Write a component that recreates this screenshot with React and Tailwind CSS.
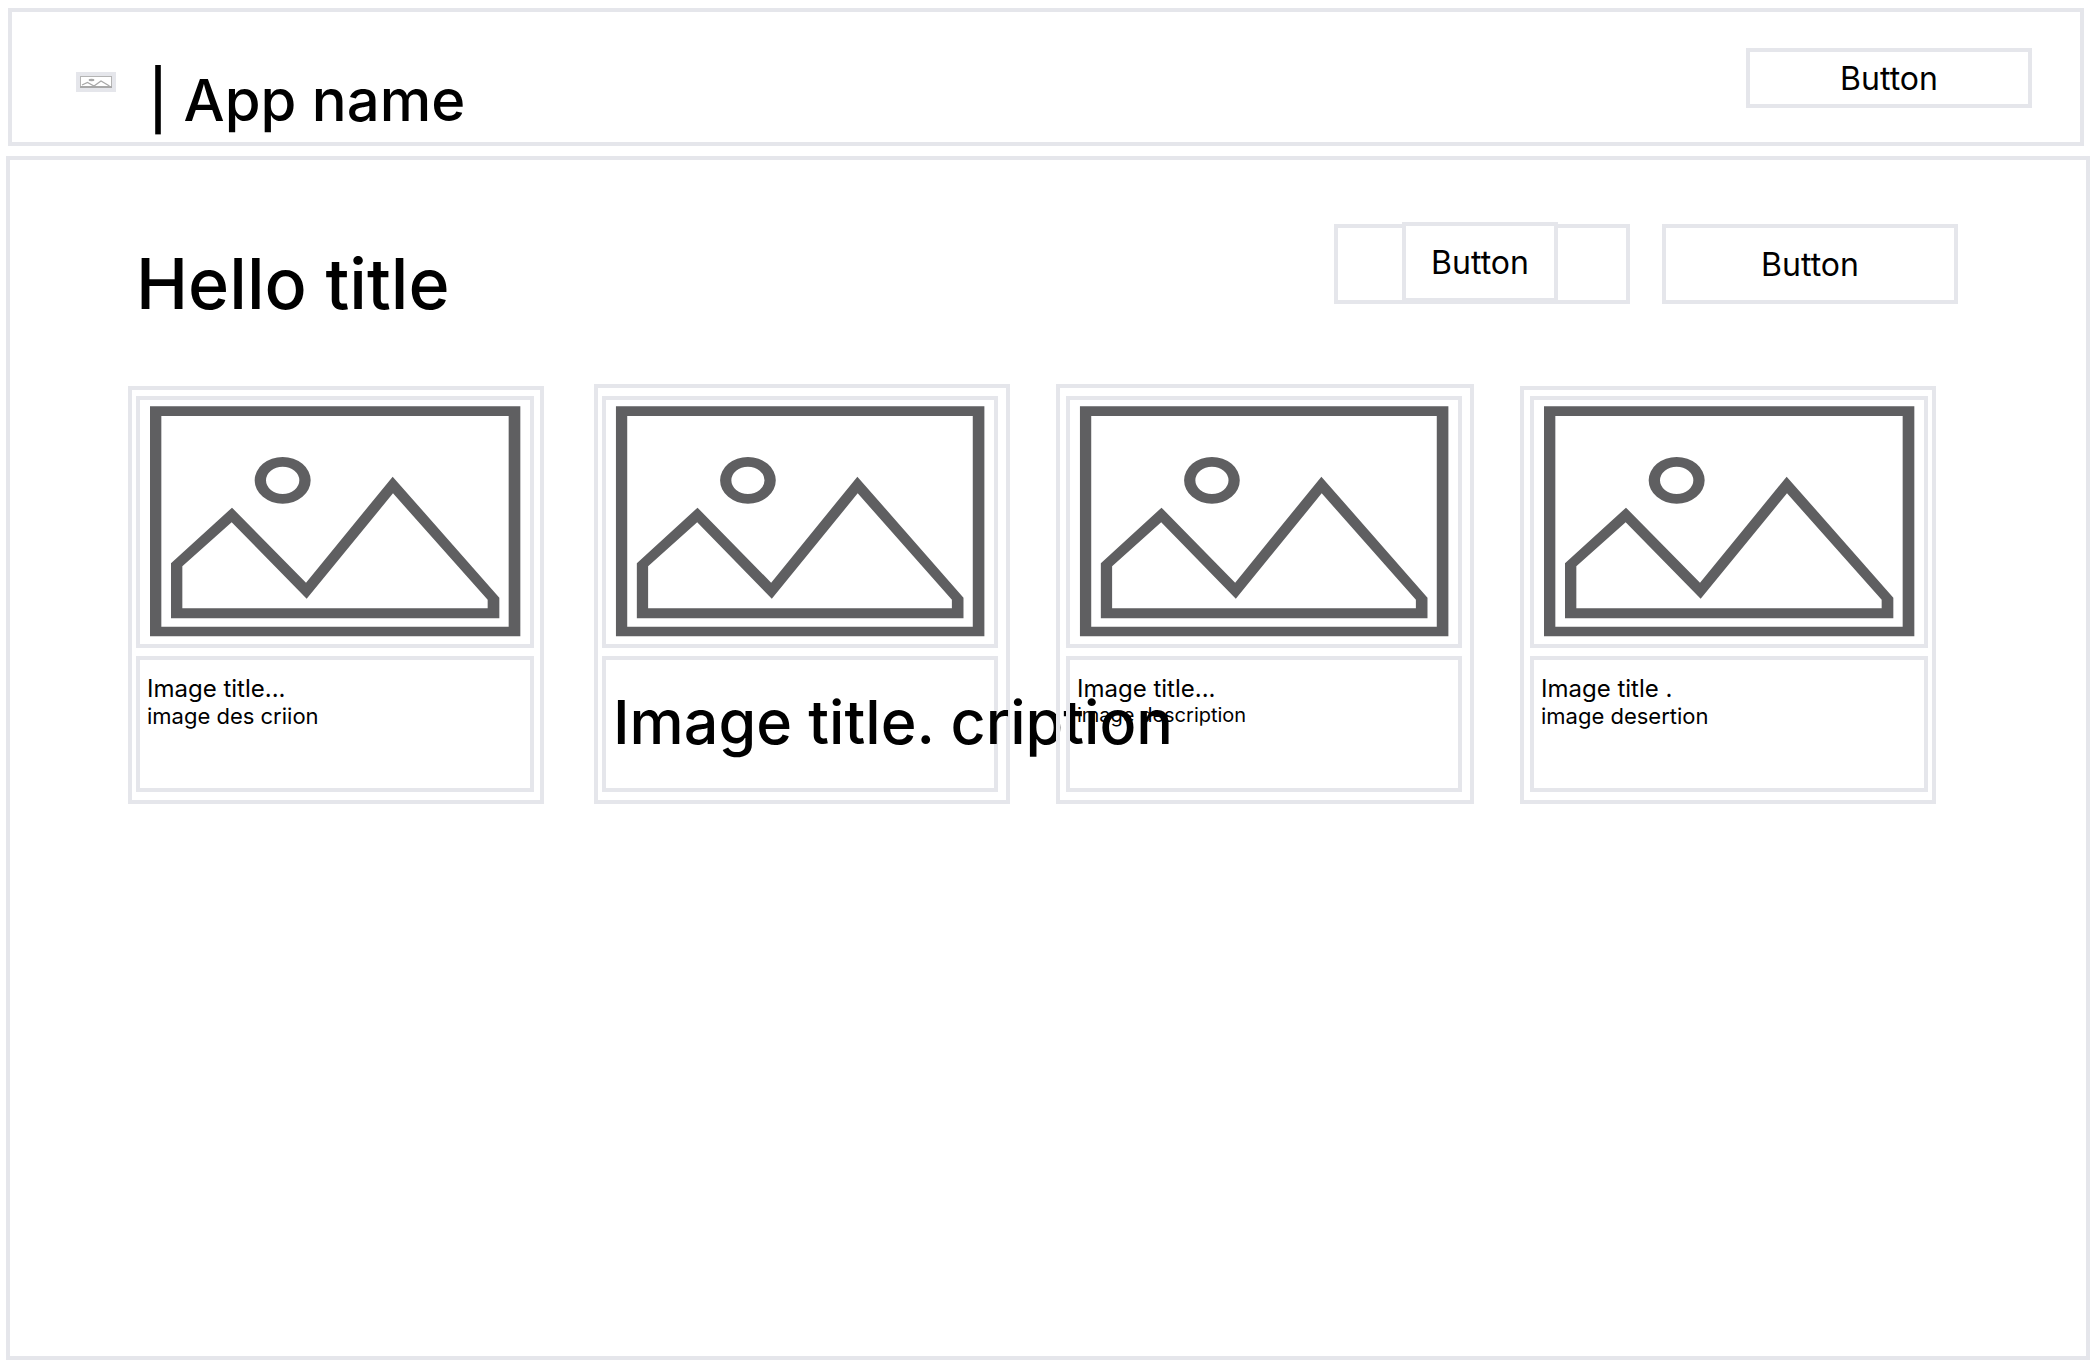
const BORDER = "border-4 border-[#e5e6eb]";

function Picture({ className, color }) {
  return (
    <svg
      viewBox="60 90 1170 732"
      preserveAspectRatio="none"
      className={className}
      fill={color}
      fillRule="evenodd"
      role="img"
      aria-label="Image placeholder"
    >
      <path d="M90 109H1201V799H90ZM124 138V770H1166V138Z" />
      <path d="M404 331a84 70 0 1 0 168 0a84 70 0 1 0-168 0ZM438 331a50 41 0 1 1 100 0a50 41 0 1 1-100 0Z" />
      <path d="M153 580 336 413 558 638 818 320 1138 683V745H153ZM187 589V715H1103V689L819 370 560 686 335 457Z" />
    </svg>
  );
}

function LogoMark() {
  return (
    <svg viewBox="0 0 32 12" className="block h-full w-full" fill="none" aria-label="Logo" role="img">
      <rect width="32" height="12" fill="#fff" />
      <path d="M.5 0V12M31.5 0V12M0 .5H32" stroke="#b4b4b4" />
      <path d="M0 11H32" stroke="#a8a8a8" strokeWidth="2" />
      <ellipse cx="11.5" cy="4" rx="3" ry="1.2" fill="#a8a8a8" />
      <path d="M2 9 7.5 6.5 14 10 21 5 29.5 10" stroke="#a8a8a8" strokeWidth="1.3" />
    </svg>
  );
}

function Card({ className, children }) {
  return (
    <article className={`flex min-w-0 flex-col gap-2 pb-2 ${BORDER} ${className}`}>
      <div className={`h-[252px] ${BORDER}`}>
        <Picture className="block h-full w-full" color="#5f5f61" />
      </div>
      <div className={`h-[136px] whitespace-nowrap pt-4 pl-[7px] ${BORDER}`}>{children}</div>
    </article>
  );
}

export default function App() {
  return (
    <div className="flex min-h-screen flex-col gap-[10px] bg-white pt-2 pr-[2px] pb-2 pl-[6px] font-['Inter',sans-serif] text-black">
      <header className={`mr-[6px] ml-[2px] flex h-[138px] items-start pr-12 pl-16 ${BORDER}`}>
        <div className={`mt-15 h-5 w-10 ${BORDER}`}>
          <LogoMark />
        </div>
        <div className="mt-[50px] ml-8 text-[58px] font-medium leading-[76px]">| App name</div>
        <button className={`mt-9 ml-auto h-[60px] w-[286px] pt-0.5 text-[32px] ${BORDER}`}>Button</button>
      </header>
      <main className={`flex-1 pr-[128px] pl-[118px] ${BORDER}`}>
        <div className="flex h-[224px] items-start gap-8 pt-16">
          <h1 className="mt-[14px] mr-auto ml-2 text-[70px] font-medium leading-[92px]">Hello title</h1>
          <div className={`flex h-20 w-[296px] pl-16 ${BORDER}`}>
            <button className={`-mt-[6px] h-20 w-[156px] bg-white pt-0.5 text-[32px] ${BORDER}`}>Button</button>
          </div>
          <button className={`h-20 w-[296px] pt-0.5 text-[32px] ${BORDER}`}>Button</button>
        </div>
        <section className="grid grid-cols-[420fr_416fr_418fr_416fr] items-end gap-x-[46px] pr-[22px]">
          <Card className="mr-1 pt-[6px] pr-[6px] pl-1">
            <p className="text-[24px] leading-[26px]">Image title...</p>
            <p className="text-[22px] leading-7">image des criion</p>
          </Card>
          <Card className="pt-2 pr-2 pl-1">
            <p className="text-[61px] font-medium leading-[92px]">Image title. cription</p>
          </Card>
          <Card className="pt-2 pr-2 pl-[6px]">
            <p className="text-[24px] leading-[26px]">Image title...</p>
            <p className="text-[20px] leading-[26px]">image description</p>
          </Card>
          <Card className="pt-[6px] pr-1 pl-[6px]">
            <p className="text-[24px] leading-[26px]">Image title .</p>
            <p className="text-[22px] leading-7">image desertion</p>
          </Card>
        </section>
      </main>
    </div>
  );
}
